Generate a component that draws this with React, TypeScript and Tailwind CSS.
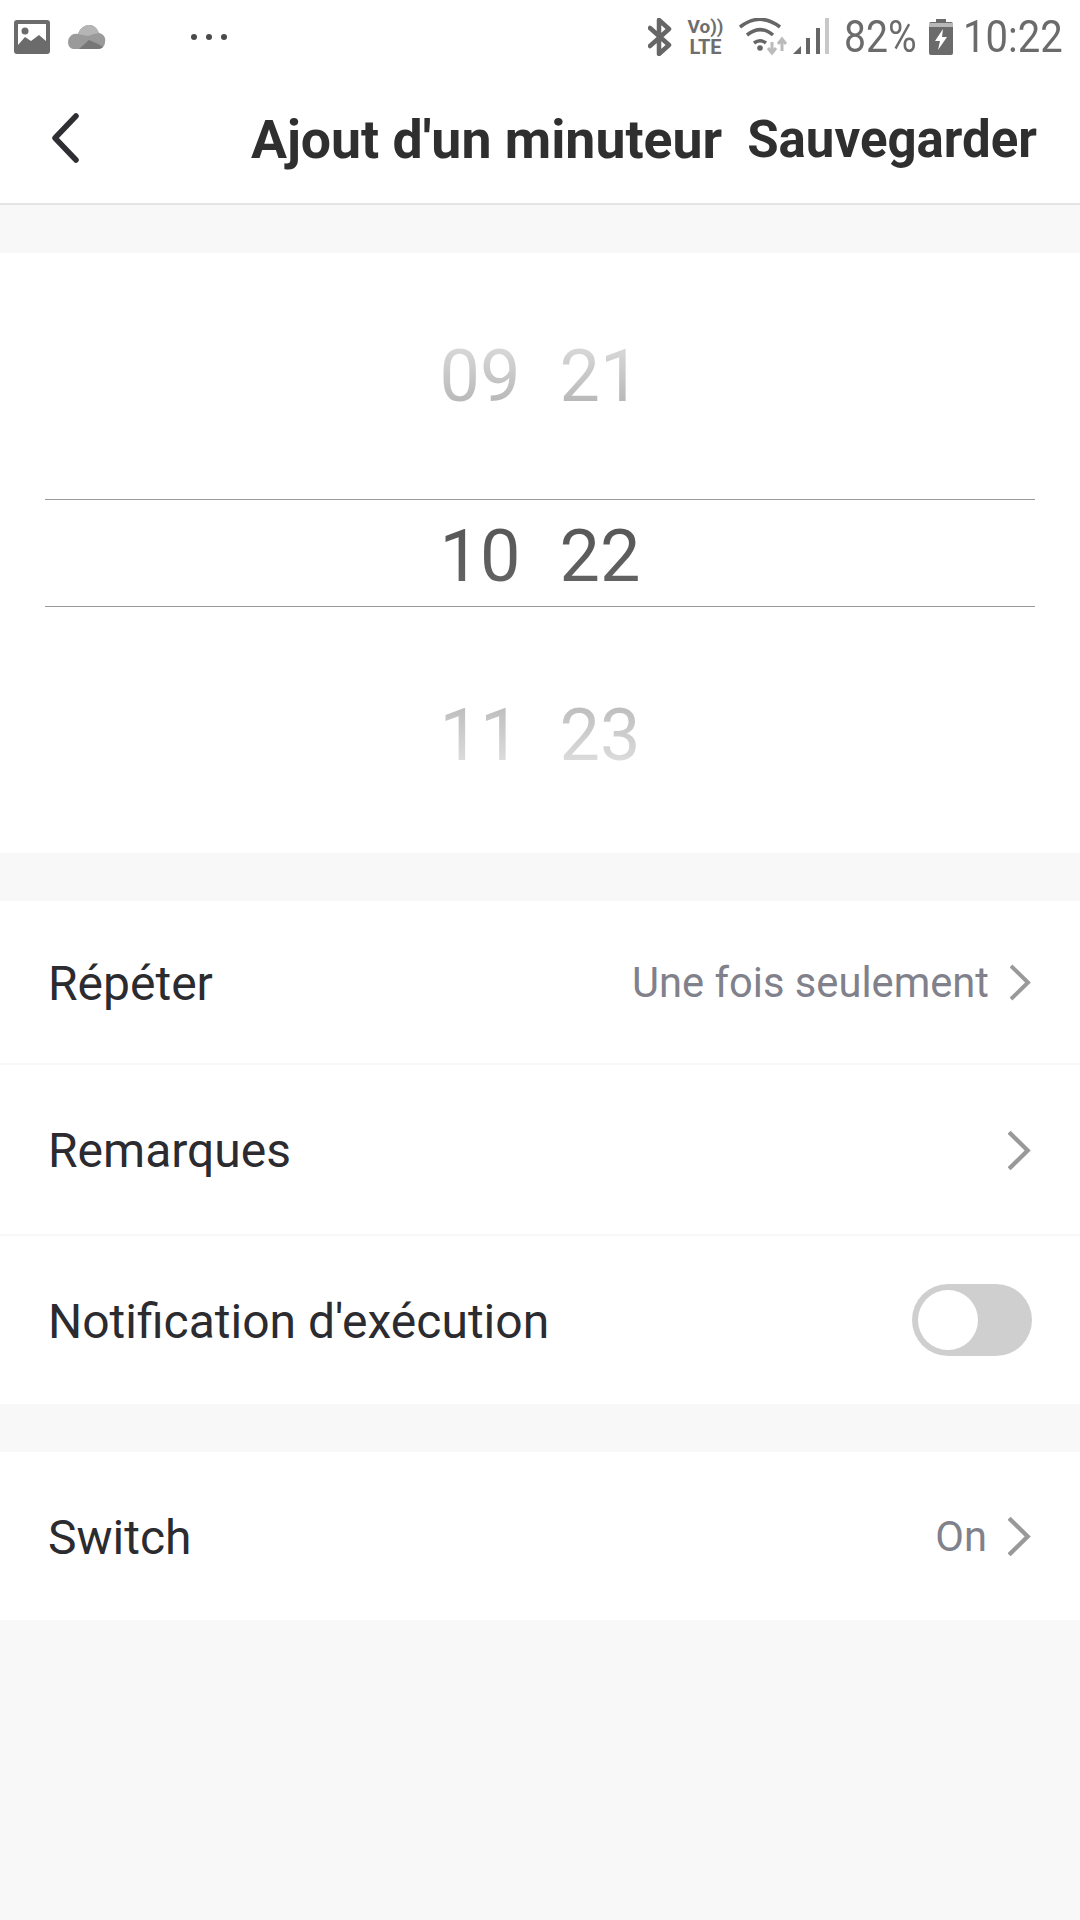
import { ReactNode } from "react";

function StatusBar() {
  return (
    <div className="flex h-[73px] items-center justify-between bg-white pl-[14px] pr-[19px]">
      <div className="flex items-center">
        <svg width="36" height="34" viewBox="0 0 36 34">
          <rect x="0" y="0" width="36" height="34" rx="3" fill="#6b6b6b" />
          <rect x="4" y="4" width="28" height="21" fill="#fff" />
          <circle cx="11" cy="11" r="3.5" fill="#6b6b6b" />
          <path d="M4 25 L11 17 L17 21 L25 15 L32 21 V28 H4 Z" fill="#6b6b6b" />
        </svg>
        <svg width="39" height="24" viewBox="0 0 39 24" className="ml-[17px]">
          <path d="M7 24 C1 24 0 17 2 13 C4 9 8 8 11 9 C13 3 18 0 22 0 C27 0 30 3 32 8 C37 9 39 13 38 17 C38 21 35 24 31 24 Z" fill="#9a9a9a" />
          <path d="M12 24 L22 15 L31 19 L36 22 C35 23 33 24 31 24 Z" fill="#777" />
          <path d="M11 9 C13 3 18 0 22 0 C27 0 30 3 32 8 L27 9 L21 11 Z" fill="#b5b5b5" />
        </svg>
        <div className="ml-[85px] flex gap-[9px]">
          <span className="h-[6px] w-[6px] rounded-full bg-[#4a4a4a]" />
          <span className="h-[6px] w-[6px] rounded-full bg-[#4a4a4a]" />
          <span className="h-[6px] w-[6px] rounded-full bg-[#4a4a4a]" />
        </div>
      </div>
      <div className="flex items-center">
        <svg width="24" height="38" viewBox="0 0 24 38" className="mr-[15px]">
          <path d="M2 10 L21 27 L11 36 V2 L21 11 L2 28" fill="none" stroke="#666" strokeWidth="4.5" strokeLinejoin="round" strokeLinecap="round" />
        </svg>
        <div className="mr-[15px] flex w-[37px] flex-col items-center font-bold text-[#6e6e6e]">
          <span className="text-[19px] leading-[20px]">Vo))</span>
          <span className="text-[20px] leading-[20px]">LTE</span>
        </div>
        <svg width="54" height="38" viewBox="0 0 54 38">
          <path d="M1 9 C14 -1 28 -1 41 9" fill="none" stroke="#666" strokeWidth="3.5" />
          <path d="M8 17 C17 10 26 10 34 17" fill="none" stroke="#666" strokeWidth="3.5" />
          <path d="M15 25 C19 22 23 22 27 25" fill="none" stroke="#666" strokeWidth="3.5" />
          <circle cx="21" cy="30" r="2.8" fill="#666" />
          <path d="M33 24 V33 M29 30 L33 35 L37 30" fill="none" stroke="#bbb" strokeWidth="3" />
          <path d="M43 33 V22 M39 26 L43 21 L47 26" fill="none" stroke="#bbb" strokeWidth="3" />
        </svg>
        <svg width="36" height="37" viewBox="0 0 36 37">
          <path d="M0 36 L8 28 V36 Z" fill="#666" />
          <rect x="13" y="20" width="4" height="16" fill="#666" />
          <rect x="23" y="10" width="4" height="26" fill="#666" />
          <rect x="32" y="0" width="4" height="36" fill="#c8c8c8" />
        </svg>
        <span className="ml-[15px] w-[72px] origin-left scale-x-[0.87] whitespace-nowrap text-[45px] leading-none text-[#6b6b6b]">82%</span>
        <svg width="24" height="36" viewBox="0 0 24 36" className="ml-[13px]">
          <path d="M7 0 H17 V3 H22 A2 2 0 0 1 24 5 V34 A2 2 0 0 1 22 36 H2 A2 2 0 0 1 0 34 V5 A2 2 0 0 1 2 3 H7 Z" fill="#6b6b6b" />
          <rect x="0" y="4" width="24" height="4" fill="#b8b8b8" />
          <path d="M14 10 L6 22 H11 L9 31 L18 18 H13 Z" fill="#fff" />
        </svg>
        <span className="ml-[10px] w-[98px] origin-left scale-x-[0.89] whitespace-nowrap text-[45px] leading-none text-[#6b6b6b]">10:22</span>
      </div>
    </div>
  );
}

function Header() {
  return (
    <div className="flex h-[132px] items-center justify-between border-b-2 border-[#e4e4e4] bg-white pl-[50px] pr-[43px]">
      <svg width="30" height="50" viewBox="0 0 30 50">
        <path d="M26 3 L5 25 L26 47" fill="none" stroke="#2e2e33" strokeWidth="5.5" strokeLinecap="round" strokeLinejoin="round" />
      </svg>
      <div className="flex items-center gap-[25px] pt-[5px] font-bold text-[#2f2f2f]">
        <span className="text-[53.6px]">Ajout d'un minuteur</span>
        <span className="text-[51px]">Sauvegarder</span>
      </div>
    </div>
  );
}

function PickerRow({ hours, minutes, tone, height }: { hours: string; minutes: string; tone: string; height: string }) {
  return (
    <div className={`flex items-center justify-center gap-[39px] ${height}`}>
      <span className={`bg-clip-text text-[72px] leading-[84px] text-transparent ${tone}`}>{hours}</span>
      <span className={`bg-clip-text text-[72px] leading-[84px] text-transparent ${tone}`}>{minutes}</span>
    </div>
  );
}

function TimePicker() {
  return (
    <div className="flex h-[600px] flex-col bg-white">
      <PickerRow hours="09" minutes="21" tone="bg-gradient-to-b from-[#dfdfdf] to-[#afafaf]" height="h-[246px] pt-[2px]" />
      <div className="mx-[45px] border-y border-[#9a9a9a]">
        <PickerRow hours="10" minutes="22" tone="bg-gradient-to-b from-[#555555] to-[#666666]" height="h-[106px] pt-[8px]" />
      </div>
      <PickerRow hours="11" minutes="23" tone="bg-gradient-to-b from-[#b7b7b7] to-[#e5e5e5]" height="h-[246px] pt-[12px]" />
    </div>
  );
}

function Chevron({ className }: { className: string }) {
  return (
    <svg viewBox="0 0 22 38" preserveAspectRatio="none" className={className}>
      <path d="M1 2 L18 19 L1 36" fill="none" stroke="#999" strokeWidth="4" />
    </svg>
  );
}

function Row({ label, height, children }: { label: string; height: string; children?: ReactNode }) {
  return (
    <div className={`flex items-center justify-between bg-white pl-[48px] pr-[48px] ${height}`}>
      <span className="pt-[3px] text-[48px] text-[#2b2b30]">{label}</span>
      {children}
    </div>
  );
}

function Value({ text, size }: { text?: string; size: string }) {
  return (
    <div className="flex items-center gap-[21px] pt-[2px]">
      {text && <span className="text-[41.7px] text-[#81818c]">{text}</span>}
      <Chevron className={size} />
    </div>
  );
}

export default function App() {
  return (
    <div className="flex h-[1920px] w-[1080px] flex-col bg-[#f8f8f8] font-['Roboto',sans-serif]">
      <StatusBar />
      <Header />
      <div className="h-[48px]" />
      <TimePicker />
      <div className="h-[48px]" />
      <Row label="Répéter" height="h-[162px]">
        <Value text="Une fois seulement" size="h-[37px] w-[22px]" />
      </Row>
      <div className="h-[2px]" />
      <Row label="Remarques" height="h-[169px]">
        <Value size="h-[41px] w-[24px]" />
      </Row>
      <div className="h-[2px]" />
      <Row label="Notification d'exécution" height="h-[168px]">
        <div className="flex h-[72px] w-[120px] items-center rounded-full bg-[#cfcfcf] pl-[6px]">
          <div className="h-[60px] w-[60px] rounded-full bg-white" />
        </div>
      </Row>
      <div className="h-[48px]" />
      <Row label="Switch" height="h-[168px]">
        <Value text="On" size="h-[41px] w-[24px]" />
      </Row>
    </div>
  );
}
